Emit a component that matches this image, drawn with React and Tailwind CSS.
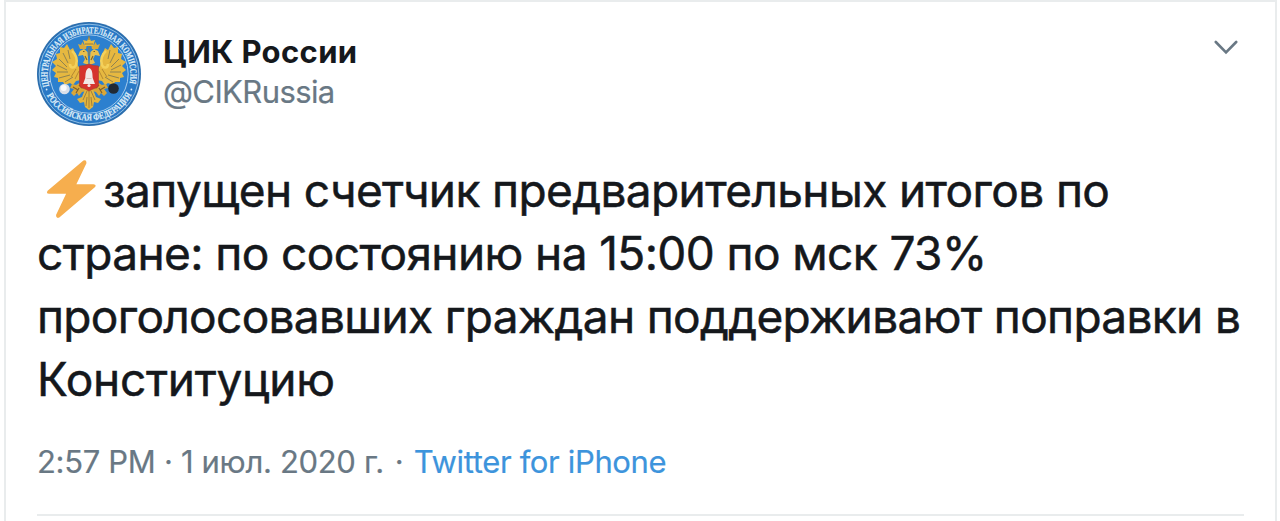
import React from "react";

const TWEET_LINES = [
  { text: "запущен счетчик предварительных итогов по", bolt: true, style: "tracking-[-0.62px]" },
  { text: "стране: по состоянию на 15:00 по мск 73%", style: "tracking-[-0.6px]" },
  { text: "проголосовавших граждан поддерживают поправки в", style: "tracking-[-0.67px]" },
  { text: "Конституцию", style: "tracking-[-0.3px]" },
];

function Wing() {
  return (
    <g>
      {/* Fanned feathers */}
      <path
        d="M44 47 L41 44 L39 33 L36 26 L33 28 L30 22 L27 26 L23 25 L23 31 L19 32 L20 37 L15 40 L19 44 L15 48 L19 51 L17 55 L21 56 L21 60 L26 60 L28 63 L33 61 L36 63 L39 59 L44 58 Z"
        fill="#e6b840"
      />
      <path
        d="M26 31 L31 41 M22 37 L30 45 M20 43 L30 48 M20 50 L31 50 M22 56 L33 53 M28 60 L36 55 M31 28 L33 37"
        stroke="#8f8250"
        strokeWidth="1"
        fill="none"
      />
      <path d="M35 29 C39 32 41 38 39 43 C37 47 33 46 33 42" stroke="#f4d15b" strokeWidth="2.6" fill="none" />
      <path d="M39 47 L34 55 M42 49 L38 57" stroke="#b58832" strokeWidth="1" />
      {/* Neck and crowned head */}
      <path d="M51.5 43 L46 41 L48 37 L46 33 L41 34 L43 29 L47 27 L50.5 30 L51 36 Z" fill="#e9bf4c" />
      <path d="M43 27 L41 22 L44 23 L45.5 20 L47 23 L50 22 L49 27 Z" fill="#d9aa3b" />
      <path d="M46 29.5 H47.5 M48 34 L50 38" stroke="#7c652f" strokeWidth="1.2" />
      {/* Leg and claw */}
      <path d="M44 60 L39 63 L35 62 L33 66 L37 67 L34 71 L37 74 L40 71 L42 74 L45 70 L49 69 L49 64 Z" fill="#d9a737" />
      <path d="M36 65 L41 68 M39 71 L42 66 M42 63 L45 66" stroke="#80602b" strokeWidth="1.2" />
    </g>
  );
}

function Emblem() {
  return (
    <svg viewBox="0 0 104 104" className="h-[104px] w-[104px] shrink-0" aria-label="ЦИК России">
      <defs>
        <path id="ring-top" d="M 12.8 66 A 41.4 41.4 0 1 1 91.2 66" />
        <path id="ring-bottom" d="M 6 64 A 47.9 47.9 0 0 0 98 64" />
      </defs>
      <circle cx="52" cy="52" r="52" fill="#2b6eae" />
      <circle cx="52" cy="52" r="49.8" fill="#2a79c6" stroke="#8fbfe6" strokeWidth="1" />
      <circle cx="52" cy="52" r="39.2" fill="#2c80cf" stroke="#a3cbed" strokeWidth="1" />
      <g fill="#dcecf8" fontFamily="Liberation Serif, serif" fontWeight="700" fontSize="9.6" stroke="#dcecf8" strokeWidth="0.2">
        <text>
          <textPath href="#ring-top" startOffset="2" textLength="150" lengthAdjust="spacingAndGlyphs">
            ЦЕНТРАЛЬНАЯ ИЗБИРАТЕЛЬНАЯ КОМИССИЯ
          </textPath>
        </text>
        <text>
          <textPath href="#ring-bottom" startOffset="10" textLength="104" lengthAdjust="spacingAndGlyphs">
            РОССИЙСКАЯ ФЕДЕРАЦИЯ
          </textPath>
        </text>
      </g>
      <circle cx="9.6" cy="67.5" r="0.9" fill="#dcecf8" />
      <circle cx="94.4" cy="67.5" r="0.9" fill="#dcecf8" />
      <Wing />
      <g transform="translate(104 0) scale(-1 1)">
        <Wing />
      </g>
      {/* Centre crown */}
      <path d="M48 24 L46 18 L50 19 L52 15 L54 19 L58 18 L56 24 Z" fill="#e8bb43" />
      <path d="M52 14 V18 M48 22 H56 M52 25 V34" stroke="#9a7a3a" strokeWidth="1.1" />
      {/* Tail */}
      <path d="M49 65 L45 75 L40 77 L43 81 L47 80 L48 85 L52 88 L56 85 L57 80 L61 81 L64 77 L59 75 L55 65 Z" fill="#e3b53e" />
      <path d="M50 69 L46 78 M54 69 L58 78 M50 75 L49 84 M54 75 L55 84 M52 69 V86" stroke="#9a7a3a" strokeWidth="0.9" />
      <path d="M42.5 44 Q47 44 52 42 Q57 44 61.5 44 V62 Q61.5 66 57 66.5 L52 69 L47 66.5 Q42.5 66 42.5 62 Z" fill="#d5332d" stroke="#a3402c" strokeWidth="0.6" />
      <path d="M52 46 C48.5 47 48.5 52 48.3 56 L46 62 H58 L55.7 56 C55.5 52 55.5 47 52 46 Z" fill="#f1e8e6" />
      <path d="M49.5 56.5 H54.5" stroke="#d6b5ae" strokeWidth="0.8" />
      <circle cx="52" cy="63.5" r="1.6" fill="#f1e8e6" />
      <circle cx="27.5" cy="67" r="5.3" fill="#d8dfe9" />
      <circle cx="26.7" cy="66" r="3" fill="#fafafa" />
      <circle cx="76.5" cy="66.5" r="5.3" fill="#202a34" />
    </svg>
  );
}

function Bolt() {
  return (
    <svg viewBox="0 0 50 60" className="mt-[-3px] mr-[6px] ml-[9px] h-[61px] w-[51px] shrink-0" aria-hidden="true">
      <path
        d="M36.7 1.5 L1.5 31.2 Q-0.3 34 3 34.2 L19.7 34.2 L9.8 55 Q9.7 59 13 57.6 L48.2 27.6 Q49.8 25 46.6 24.8 L29.8 24.8 L39.7 4.3 Q40 .4 36.7 1.5 Z"
        fill="#f6ae4e"
      />
    </svg>
  );
}

export default function App() {
  return (
    <div className="h-[521px] overflow-hidden bg-white pr-[3px] pl-1 font-['Inter',sans-serif]">
      <article className="h-full border-x-2 border-t-2 border-[#e9eced] pr-[31px] pl-[31px]">
        <header className="flex h-[126px] items-start pt-5">
          <Emblem />
          <div className="ml-[22px] flex-1 pt-[9px] whitespace-nowrap">
            <div className="h-[41px] text-[31px] leading-[41px] font-bold tracking-[0.35px] text-[#15181c]">
              <span>ЦИК России</span>
            </div>
            <div className="h-[41px] text-[31px] leading-[40px] tracking-[-0.6px] text-[#697884] [-webkit-text-stroke:0.2px]">
              <span>@CIKRussia</span>
            </div>
          </div>
          <svg viewBox="0 0 24 15" className="mt-[18px] mr-[6px] h-[15px] w-6" fill="none">
            <path d="M1.8 2 L12 12.3 L22.2 2" stroke="#697884" strokeWidth="2.6" strokeLinecap="round" />
          </svg>
        </header>

        <div className="pt-[31px] text-[46px] text-[#15181c] [-webkit-text-stroke:0.5px]">
          {TWEET_LINES.map((line) => (
            <div key={line.text} className="flex h-[63px] items-center leading-[63px] whitespace-nowrap">
              {line.bolt && <Bolt />}
              <span className={line.style}>{line.text}</span>
            </div>
          ))}
        </div>

        <div className="mt-7 flex h-[46px] items-center text-[31px] whitespace-nowrap text-[#697884] [-webkit-text-stroke:0.2px]">
          <span className="tracking-[-0.32px]">2:57 PM · 1 июл. 2020 г.</span>
          <span className="mr-[10px] ml-[11px]">·</span>
          <span className="tracking-[-0.35px] text-[#3d94dc]">Twitter for iPhone</span>
        </div>
        <div className="mt-[29px] h-0.5 bg-[#e9eced]" />
      </article>
    </div>
  );
}
